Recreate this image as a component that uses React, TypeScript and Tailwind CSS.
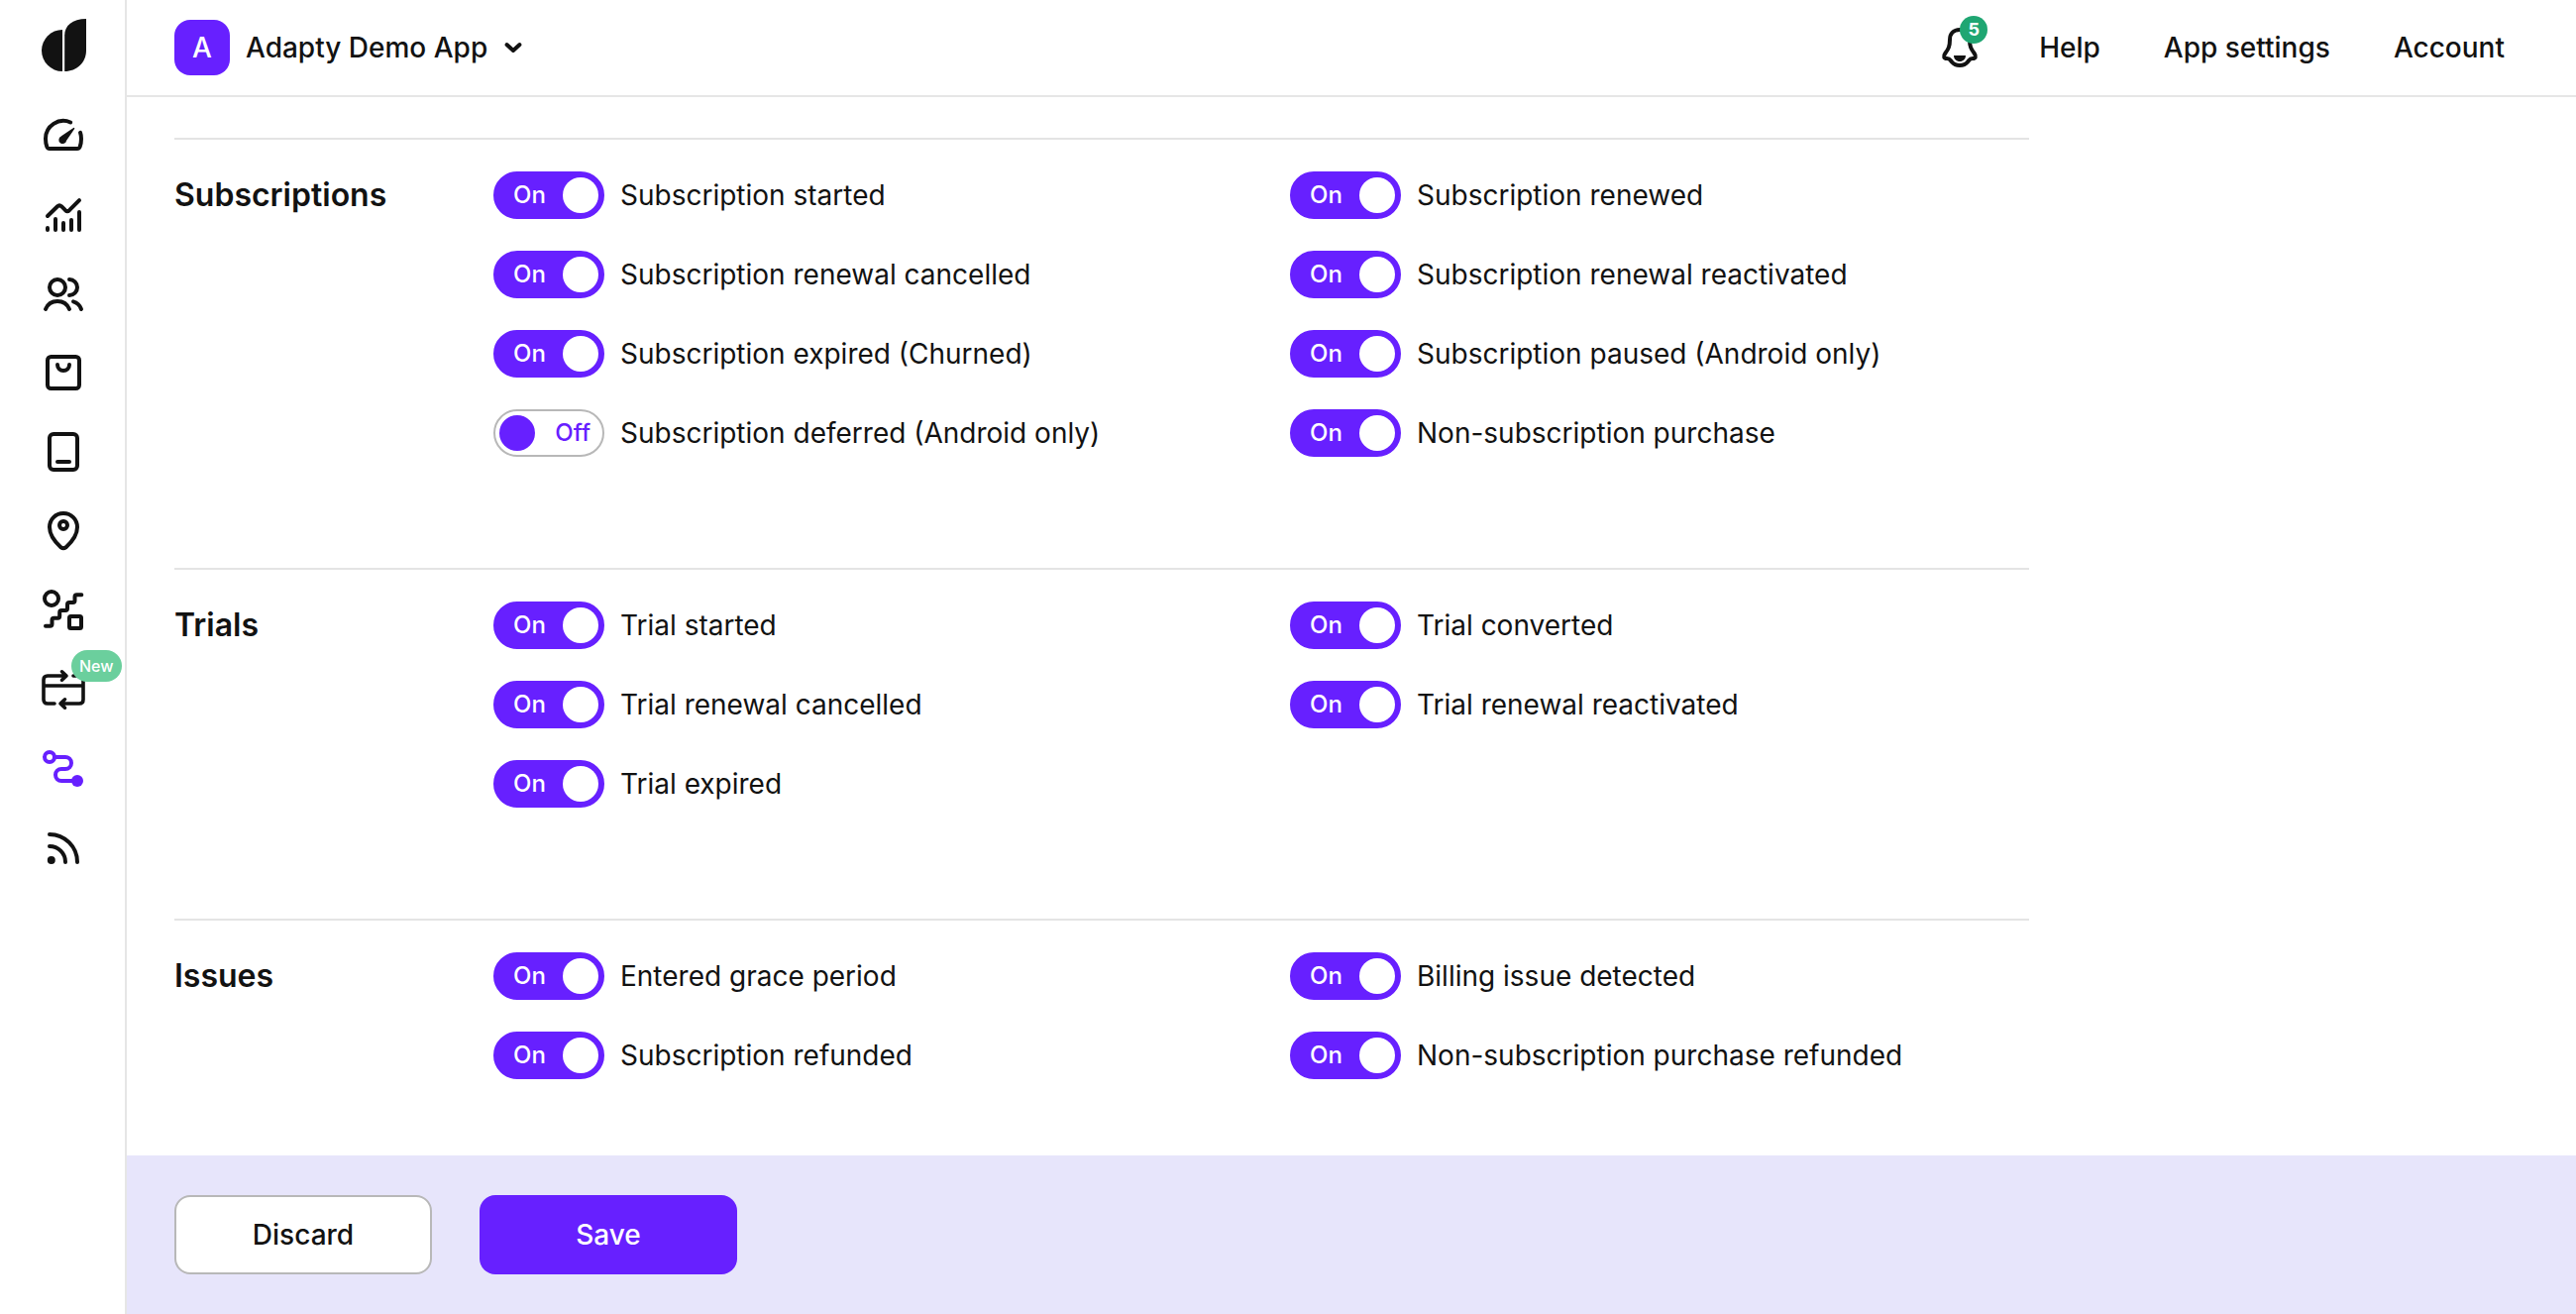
import { useState } from "react";
import type { ReactNode } from "react";

function Icon({ children, width = 4 }: { children: ReactNode; width?: number }) {
  return (
    <svg
      aria-hidden="true"
      viewBox="0 0 48 48"
      className="size-12"
      fill="none"
      stroke="currentColor"
      strokeWidth={width}
      strokeLinecap="round"
      strokeLinejoin="round"
    >
      {children}
    </svg>
  );
}

type NavItem = { name: string; icon: ReactNode; active?: boolean; badge?: string };

const navItems: NavItem[] = [
  {
    name: "Overview",
    icon: (
      <Icon>
        <path d="M31.2 11.5A18 18 0 0 0 6 28C6 31.5 6.5 34 7.4 36.2Q8.2 38 10 38H38Q39.8 38 40.6 36.2C41.5 34 42 31.5 42 28Q42 24.5 41 21.8" />
        <path d="M34.6 17.6L26.4 29.6A3.2 3.2 0 1 1 22 26.2Z" fill="currentColor" strokeWidth="1.4" />
      </Icon>
    ),
  },
  {
    name: "Analytics",
    icon: (
      <Icon>
        <path d="M8 26L18 16.2Q20 14.4 22 16.2L26 20.2Q28 22 30 20.2L40 10.2" />
        <path d="M8 38V40M16 29V40M24 33V40M32 30V40M40 22V40" />
      </Icon>
    ),
  },
  {
    name: "Profiles",
    icon: (
      <Icon>
        <circle cx="18" cy="18" r="8" />
        <path d="M30 10a8 8 0 0 1 0 16M6 40C8 35 12.5 32 18 32S28 35 30 40M34 32.4C38 33.5 40.6 36 42 40" />
      </Icon>
    ),
  },
  {
    name: "Products",
    icon: (
      <Icon>
        <rect x="8" y="8" width="32" height="32" rx="3.5" />
        <path d="M18 16a6 6 0 0 0 12 0" />
      </Icon>
    ),
  },
  {
    name: "Paywalls",
    icon: (
      <Icon>
        <rect x="10" y="6" width="28" height="36" rx="4" />
        <path d="M18 34H30" />
      </Icon>
    ),
  },
  {
    name: "Placements",
    icon: (
      <Icon>
        <path d="M24 6C16 6 10 12.2 10 20C10 27 15 34.5 21.6 40.4Q24 42.2 26.4 40.4C33 34.5 38 27 38 20C38 12.2 32 6 24 6Z" />
        <circle cx="24" cy="18" r="4" />
      </Icon>
    ),
  },
  {
    name: "A/B tests",
    icon: (
      <Icon>
        <circle cx="12" cy="12" r="7" />
        <rect x="30" y="30" width="12" height="12" rx="1.5" />
        <path d="M6 39.7H10.5Q12.5 39.7 12.5 37.7V33.7Q12.5 31.7 14.5 31.7H18.2Q20.2 31.7 20.2 29.7V26Q20.2 24 22.2 24H26Q28 24 28 22V18Q28 16 30 16H33.5Q35.5 16 35.5 14V10.3Q35.5 8.3 37.5 8.3H42.3" />
      </Icon>
    ),
  },
  {
    name: "Refund saver",
    badge: "New",
    icon: (
      <Icon width={3.6}>
        <path d="M15 38H8Q4 38 4 34V14Q4 10 8 10H26M22.5 5.8L27 10L22.5 14.2M34 10H40Q44 10 44 14V34Q44 38 40 38H22M25.5 33.8L21 38L25.5 42.2M4 20H44" />
      </Icon>
    ),
  },
  {
    name: "Integrations",
    active: true,
    icon: (
      <Icon>
        <circle cx="10" cy="12" r="5" />
        <path d="M15 12H26a6 6 0 0 1 0 12H22a6 6 0 0 0 0 12H36" />
        <circle cx="38" cy="36" r="6" fill="currentColor" stroke="none" />
      </Icon>
    ),
  },
  {
    name: "Event feed",
    icon: (
      <Icon>
        <path d="M10 10A28 28 0 0 1 38 38M10 22A16 16 0 0 1 26 38" />
        <circle cx="11.8" cy="36" r="4" fill="currentColor" stroke="none" />
      </Icon>
    ),
  },
];

const sections = [
  {
    title: "Subscriptions",
    events: [
      { label: "Subscription started", on: true },
      { label: "Subscription renewed", on: true },
      { label: "Subscription renewal cancelled", on: true },
      { label: "Subscription renewal reactivated", on: true },
      { label: "Subscription expired (Churned)", on: true },
      { label: "Subscription paused (Android only)", on: true },
      { label: "Subscription deferred (Android only)", on: false },
      { label: "Non-subscription purchase", on: true },
    ],
  },
  {
    title: "Trials",
    events: [
      { label: "Trial started", on: true },
      { label: "Trial converted", on: true },
      { label: "Trial renewal cancelled", on: true },
      { label: "Trial renewal reactivated", on: true },
      { label: "Trial expired", on: true },
    ],
  },
  {
    title: "Issues",
    events: [
      { label: "Entered grace period", on: true },
      { label: "Billing issue detected", on: true },
      { label: "Subscription refunded", on: true },
      { label: "Non-subscription purchase refunded", on: true },
    ],
  },
];

function Toggle({ label, initial }: { label: string; initial: boolean }) {
  const [on, setOn] = useState(initial);
  return (
    <label className="flex cursor-pointer items-center gap-4">
      <input
        type="checkbox"
        role="switch"
        className="peer sr-only"
        checked={on}
        onChange={(e) => setOn(e.target.checked)}
      />
      <span
        aria-hidden="true"
        className={
          "flex h-12 w-28 shrink-0 items-center justify-between rounded-full border-2 text-2xl font-medium peer-focus-visible:ring-4 peer-focus-visible:ring-[#c9b5ff] " +
          (on
            ? "border-[#6720ff] bg-[#6720ff] pr-1 pl-[18px] text-white"
            : "flex-row-reverse border-[#b8b8b8] bg-white pr-3 pl-1 text-[#6720ff]")
        }
      >
        <span>{on ? "On" : "Off"}</span>
        <span className={"size-9 rounded-full " + (on ? "bg-white" : "bg-[#6720ff]")} />
      </span>
      <span className="text-[28px] leading-9">{label}</span>
    </label>
  );
}

function Sidebar() {
  return (
    <aside className="flex w-32 shrink-0 flex-col items-center border-r-2 border-[#e6e6e6] pt-4 pl-0.5">
      <a href="#home" aria-label="Home">
        <svg aria-hidden="true" viewBox="0 0 48 64" className="h-16 w-12" fill="currentColor">
          <path d="M23 14V56A21 21 0 0 1 23 14Z" />
          <path d="M25.2 56V19.5C25.2 10 33 3 47 3V35C47 47 37.5 56 25.2 56Z" />
        </svg>
      </a>
      <nav aria-label="Main" className="mt-8 flex flex-col gap-8">
        {navItems.map((item) => (
          <a
            key={item.name}
            href="#section"
            aria-label={item.name}
            aria-current={item.active ? "page" : undefined}
            className={"relative " + (item.active ? "text-[#6720ff]" : "")}
          >
            {item.icon}
            {item.badge && (
              <span className="absolute -top-4 left-8 rounded-full bg-[#6bcf9d] px-2 text-base leading-8 font-medium text-white">
                {item.badge}
              </span>
            )}
          </a>
        ))}
      </nav>
    </aside>
  );
}

function Header() {
  return (
    <header className="flex h-[98px] shrink-0 items-center justify-between border-b-2 border-[#e6e6e6] pr-[72px] pl-12 text-[28px] font-medium">
      <button type="button" className="flex items-center gap-4">
        <span className="flex size-14 items-center justify-center rounded-2xl bg-[#6720ff] text-white">A</span>
        <span>Adapty Demo App</span>
        <svg
          aria-hidden="true"
          viewBox="0 0 20 12"
          className="h-3 w-5"
          fill="none"
          stroke="currentColor"
          strokeWidth="4"
          strokeLinecap="round"
          strokeLinejoin="round"
        >
          <path d="M3.5 3L10 9L16.5 3" />
        </svg>
      </button>
      <div className="flex items-center gap-15">
        <button type="button" aria-label="Notifications, 5 unread" className="relative">
          <svg
            aria-hidden="true"
            viewBox="0 0 40 44"
            className="h-11 w-10"
            fill="none"
            stroke="currentColor"
            strokeWidth="4"
            strokeLinecap="round"
            strokeLinejoin="round"
          >
            <path d="M20 4C13.500 4 10 8.500 10 14C10 21 8.500 23.500 5.500 27.500C3 31 4 33 7 33C10 33 10 34 12 36.500C14 39 16.500 40 20 40S26 39 28 36.500C30 34 30 33 33 33C36 33 37 31 34.500 27.500C31.500 23.500 30 21 30 14C30 8.500 26.500 4 20 4Z" />
            <path d="M14 30H26C26 33.500 23.500 36 20 36S14 33.500 14 30Z" fill="currentColor" stroke="none" />
          </svg>
          <span className="absolute -top-2.5 left-5 flex size-7 items-center justify-center rounded-full bg-[#1fa672] text-lg font-bold text-white">
            5
          </span>
        </button>
        <nav aria-label="Account" className="flex items-center gap-16">
          <a href="#help">Help</a>
          <a href="#app-settings">App settings</a>
          <a href="#account">Account</a>
        </nav>
      </div>
    </header>
  );
}

export default function App() {
  return (
    <div className="flex min-h-screen bg-white font-['Inter',sans-serif] text-[#121212]">
      <Sidebar />
      <div className="flex min-w-0 flex-1 flex-col">
        <Header />
        <main className="flex flex-1 flex-col gap-28 px-12 pt-[41px] pb-16">
          {sections.map((section) => (
            <section
              key={section.title}
              className="grid max-w-[1872px] grid-cols-[264px_1fr] gap-x-[58px] border-t-2 border-[#e4e4e4] pt-8"
            >
              <h2 className="text-[32px] leading-12 font-semibold">{section.title}</h2>
              <div className="grid grid-cols-2 gap-x-[58px] gap-y-8">
                {section.events.map((event) => (
                  <Toggle key={event.label} label={event.label} initial={event.on} />
                ))}
              </div>
            </section>
          ))}
        </main>
        <footer className="flex shrink-0 gap-12 bg-[#e7e5fb] px-12 py-10 text-[28px] font-medium">
          <button type="button" className="h-20 w-[260px] rounded-2xl border-2 border-[#b8b8b8] bg-white">
            Discard
          </button>
          <button type="button" className="h-20 w-[260px] rounded-2xl bg-[#6720ff] text-white">
            Save
          </button>
        </footer>
      </div>
    </div>
  );
}
